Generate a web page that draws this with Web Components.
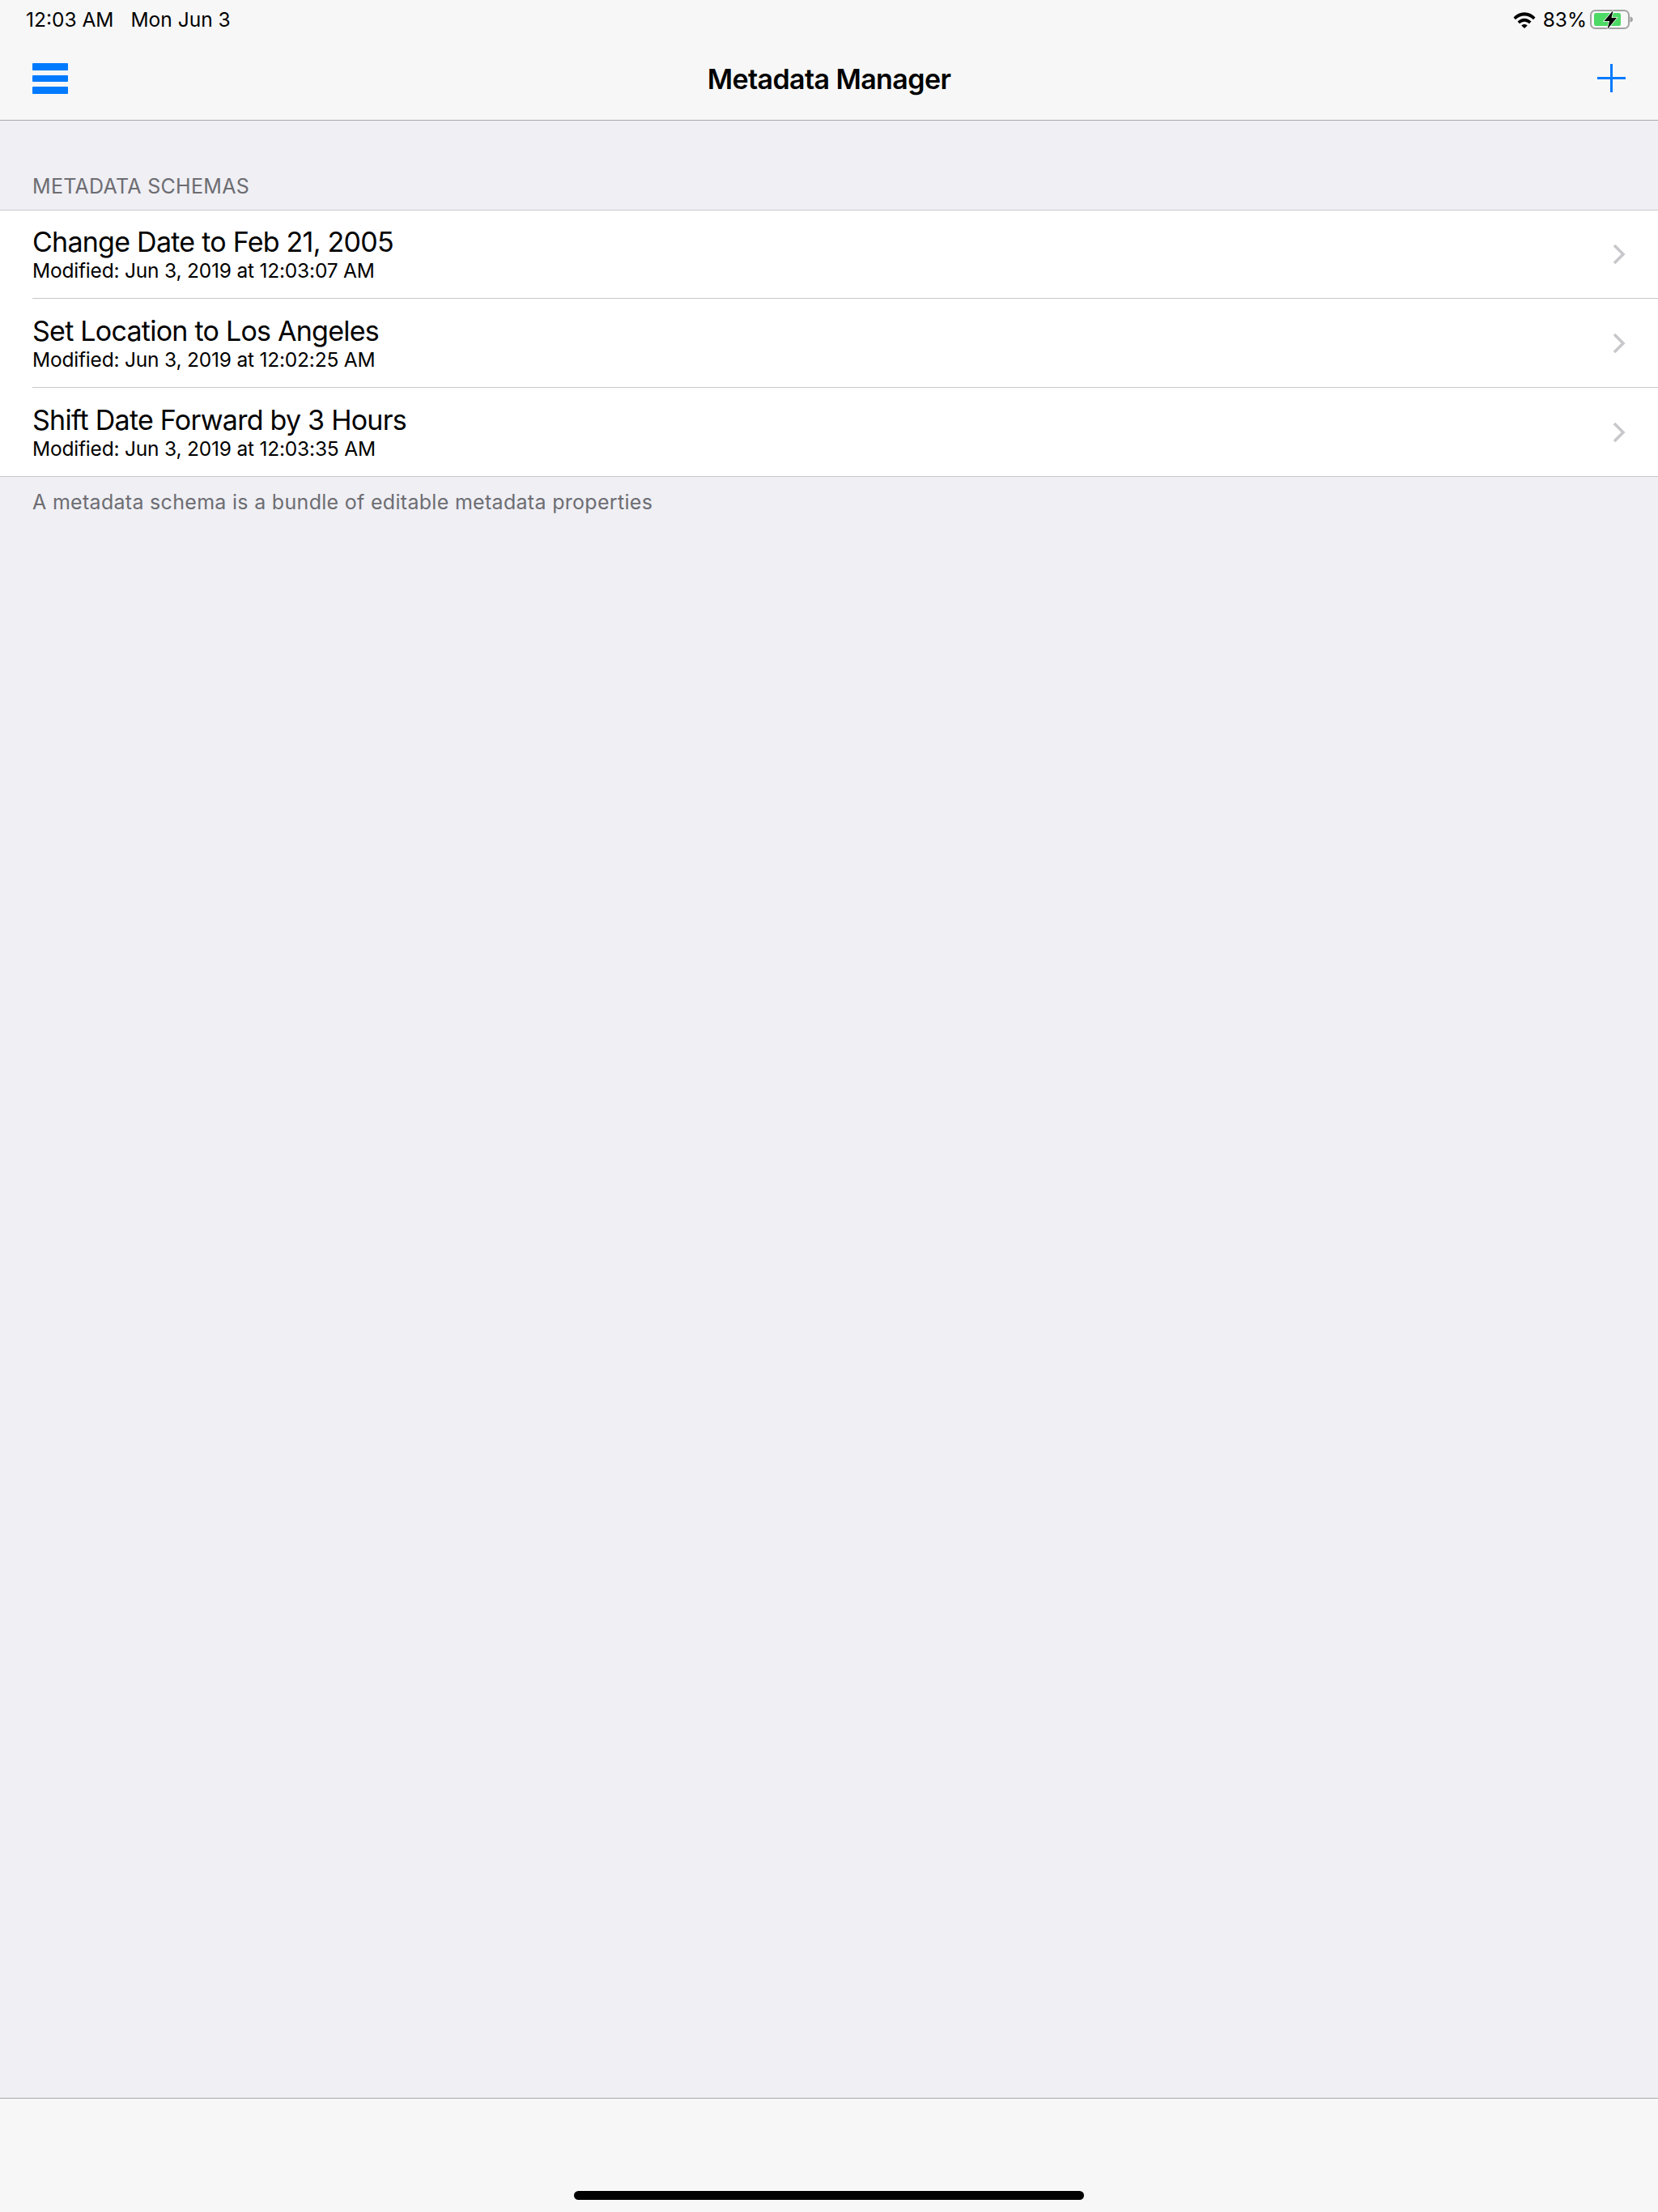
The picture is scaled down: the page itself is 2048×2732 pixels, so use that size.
<!DOCTYPE html>
<html>
<head>
<meta charset="utf-8">
<title>Metadata Manager</title>
<style>
html, body { margin: 0; height: 100%; }
body {
    width: 2048px;
    height: 2732px;
    font-family: Inter, "Liberation Sans", sans-serif;
    background: #efeff4;
}
</style>
</head>
<body>
<app-shell>
    <nav-header slot="header" title="Metadata Manager"></nav-header>
    <schema-section header="METADATA SCHEMAS" footer="A metadata schema is a bundle of editable metadata properties">
        <schema-row name="Change Date to Feb 21, 2005" modified="Modified: Jun 3, 2019 at 12:03:07 AM" first></schema-row>
        <schema-row name="Set Location to Los Angeles" modified="Modified: Jun 3, 2019 at 12:02:25 AM"></schema-row>
        <schema-row name="Shift Date Forward by 3 Hours" modified="Modified: Jun 3, 2019 at 12:03:35 AM" last></schema-row>
    </schema-section>
    <home-toolbar slot="footer"></home-toolbar>
</app-shell>

<script>
class AppShell extends HTMLElement {
    constructor() {
        super()
        this.attachShadow({ mode: 'open' })
        this.shadowRoot.innerHTML = `
            <style>
            :host {
                display: flex;
                flex-direction: column;
                height: 2732px;
            }
            main { flex: 1; }
            </style>
            <slot name="header"></slot>
            <main><slot></slot></main>
            <slot name="footer"></slot>
        `
    }
}

class StatusBar extends HTMLElement {
    constructor() {
        super()
        this.attachShadow({ mode: 'open' })
        this.shadowRoot.innerHTML = `
            <style>
            :host {
                display: flex;
                align-items: center;
                height: 48px;
                padding: 0 30px 0 32px;
                font-size: 24.5px;
                color: #000;
            }
            .date { margin-left: 21px; }
            .right {
                margin-left: auto;
                display: flex;
                align-items: center;
            }
            .pct { margin: 0 4px 0 9px; }
            svg { display: block; }
            </style>
            <span>12:03 AM</span>
            <span class="date">Mon Jun 3</span>
            <div class="right">
                <svg width="28" height="21" viewBox="0 0 28 21">
                    <path d="M0.5 7.5 C8 -0.8 20 -0.8 27.5 7.5 L25 10.2 C19 3.8 9 3.8 3 10.2 Z" fill="#000"/>
                    <path d="M5.5 12.6 C10.5 7.4 17.5 7.4 22.5 12.6 L20 15.2 C16.5 11.8 11.5 11.8 8 15.2 Z" fill="#000"/>
                    <path d="M10.3 17.5 C12.5 15.5 15.5 15.5 17.7 17.5 L14 21 Z" fill="#000"/>
                </svg>
                <span class="pct">83%</span>
                <svg width="54" height="24" viewBox="0 0 54 24">
                    <rect x="1" y="1" width="47" height="22" rx="5.5" fill="none" stroke="#a3a3a3" stroke-width="2"/>
                    <rect x="5" y="4" width="33" height="16" rx="2.5" fill="#4cd964"/>
                    <path d="M49.5 8.5 C52 9 53 10.5 53 12 C53 13.5 52 15 49.5 15.5 Z" fill="#a3a3a3"/>
                    <path d="M28.5 1 L17.5 14 L24 14 L21.5 24 L33 10 L26.5 10 Z" fill="#000" stroke="#f7f7f7" stroke-width="1.6" paint-order="stroke"/>
                </svg>
            </div>
        `
    }
}

class NavHeader extends HTMLElement {
    constructor() {
        super()
        this.attachShadow({ mode: 'open' })
        this.shadowRoot.innerHTML = `
            <style>
            :host {
                display: block;
                background: #f7f7f7;
                border-bottom: 1px solid #a9a9ac;
            }
            .bar {
                display: grid;
                grid-template-columns: 1fr auto 1fr;
                align-items: center;
                height: 97px;
                padding: 0 40px 3px;
            }
            .title {
                font-size: 34px;
                font-weight: 600;
                letter-spacing: -0.6px;
                color: #000;
                padding-top: 2px;
            }
            svg { display: block; }
            .plus { justify-self: end; }
            </style>
            <status-bar></status-bar>
            <div class="bar">
                <svg width="44" height="38" viewBox="0 0 44 38" fill="#007aff">
                    <rect x="0" y="0" width="44" height="9" rx="1"/>
                    <rect x="0" y="15" width="44" height="8" rx="1"/>
                    <rect x="0" y="29" width="44" height="9" rx="1"/>
                </svg>
                <span class="title"></span>
                <svg class="plus" width="35" height="35" viewBox="0 0 35 35" fill="#007aff">
                    <rect x="16" y="0" width="3" height="35"/>
                    <rect x="0" y="16" width="35" height="3"/>
                </svg>
            </div>
        `
        this.shadowRoot.querySelector('.title').textContent = this.getAttribute('title')
    }
}

class SchemaSection extends HTMLElement {
    constructor() {
        super()
        this.attachShadow({ mode: 'open' })
        this.shadowRoot.innerHTML = `
            <style>
            :host { display: block; }
            .header {
                padding: 66px 40px 0;
                height: 44px;
                font-size: 25px;
                line-height: 30px;
                letter-spacing: 0.3px;
                color: #6d6d72;
            }
            .list {
                background: #fff;
                border-top: 1px solid #c8c7cc;
                border-bottom: 1px solid #c8c7cc;
            }
            .footer {
                padding: 16px 40px 0;
                font-size: 25px;
                line-height: 30px;
                letter-spacing: 0.3px;
                color: #6d6d72;
            }
            </style>
            <div class="header"></div>
            <div class="list"><slot></slot></div>
            <div class="footer"></div>
        `
        this.shadowRoot.querySelector('.header').textContent = this.getAttribute('header')
        this.shadowRoot.querySelector('.footer').textContent = this.getAttribute('footer')
    }
}

class SchemaRow extends HTMLElement {
    constructor() {
        super()
        this.attachShadow({ mode: 'open' })
        this.shadowRoot.innerHTML = `
            <style>
            :host {
                display: block;
                padding-left: 40px;
            }
            .row {
                display: flex;
                align-items: center;
                height: 109px;
                padding-right: 40px;
                border-bottom: 1px solid #c8c7cc;
            }
            :host([first]) .row { height: 108px; }
            :host([last]) .row { border-bottom: none; }
            .text {
                flex: 1;
                padding-bottom: 2px;
            }
            .name {
                font-size: 34px;
                line-height: 42px;
                letter-spacing: -0.75px;
                color: #000;
            }
            .modified {
                font-size: 24.5px;
                line-height: 28px;
                letter-spacing: -0.2px;
                color: #000;
            }
            svg { display: block; }
            </style>
            <div class="row">
                <div class="text">
                    <div class="name"></div>
                    <div class="modified"></div>
                </div>
                <svg width="16" height="26" viewBox="0 0 16 26" fill="none" stroke="#c7c7cc" stroke-width="3.6">
                    <path d="M2 2 L13 13 L2 24"/>
                </svg>
            </div>
        `
        this.shadowRoot.querySelector('.name').textContent = this.getAttribute('name')
        this.shadowRoot.querySelector('.modified').textContent = this.getAttribute('modified')
    }
}

class HomeToolbar extends HTMLElement {
    constructor() {
        super()
        this.attachShadow({ mode: 'open' })
        this.shadowRoot.innerHTML = `
            <style>
            :host {
                display: flex;
                justify-content: center;
                align-items: flex-end;
                height: 141px;
                padding-bottom: 15px;
                box-sizing: border-box;
                background: #f7f7f7;
                border-top: 1px solid #a9a9ac;
            }
            .indicator {
                width: 630px;
                height: 11px;
                border-radius: 6px;
                background: #000;
            }
            </style>
            <div class="indicator"></div>
        `
    }
}

customElements.define('status-bar', StatusBar)
customElements.define('nav-header', NavHeader)
customElements.define('schema-row', SchemaRow)
customElements.define('schema-section', SchemaSection)
customElements.define('home-toolbar', HomeToolbar)
customElements.define('app-shell', AppShell)
</script>
</body>
</html>
